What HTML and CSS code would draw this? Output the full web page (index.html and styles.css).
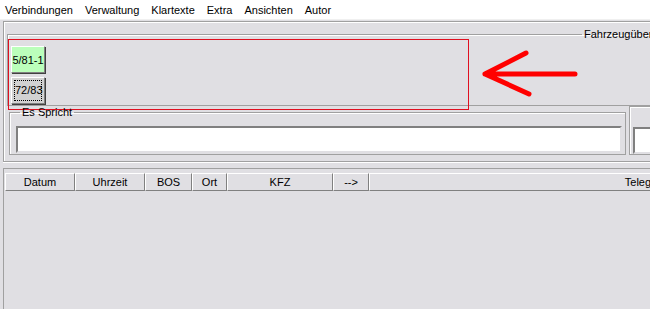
FILE: index.html
```html
<!DOCTYPE html>
<html>

<head>
    <title>Funk Leitstelle</title>
    <link rel="stylesheet" href="styles.css">
</head>

<body>
    <div class="menubar">
        <span>Verbindungen</span>
        <span>Verwaltung</span>
        <span>Klartexte</span>
        <span>Extra</span>
        <span>Ansichten</span>
        <span>Autor</span>
    </div>

    <div class="top-panel">
        <fieldset class="fahrzeuge">
            <legend>Fahrzeugübersicht</legend>
            <div class="marked">
                <button class="car green">5/81-1</button>
                <button class="car focused"><span>72/83</span></button>
            </div>
        </fieldset>

        <div class="speak-row">
            <fieldset class="speaker">
                <legend>Es Spricht</legend>
                <input type="text" class="field">
            </fieldset>
            <fieldset class="speaker second">
                <input type="text" class="field">
            </fieldset>
        </div>

        <!-- annotation arrow -->
        <svg class="arrow" width="110" height="56" viewBox="0 0 110 56">
            <path d="M96 27 L6 27 M6 27 L47 6 M6 27 L50 47" fill="none" stroke="#ff0000" stroke-width="5" stroke-linecap="round" stroke-linejoin="round"/>
        </svg>
    </div>

    <div class="log">
        <div class="log-head">
            <div class="col" style="width:70px">Datum</div>
            <div class="col" style="width:70px">Uhrzeit</div>
            <div class="col" style="width:47px">BOS</div>
            <div class="col" style="width:35px">Ort</div>
            <div class="col" style="width:106px">KFZ</div>
            <div class="col" style="width:36px">--&gt;</div>
            <div class="col" style="width:566px">Telegramm</div>
        </div>
    </div>
</body>

</html>
```

FILE: styles.css
```css
body {
    margin: 0;
    background-color: #e0dfe3;
    font-family: "Liberation Sans", Arial, sans-serif;
    font-size: 11px;
    color: #000;
    overflow: hidden;
    width: 650px;
    height: 309px;
}

.menubar {
    height: 19px;
    background-color: #fff;
    display: flex;
    align-items: center;
    padding-left: 5px;
    border-bottom: 1px solid #f0f0f0;
}

.menubar span {
    margin-right: 12px;
}

.top-panel {
    position: relative;
    width: 720px;
    height: 141px;
    margin: 1px 0 0 3px;
    border-top: 1px solid #a0a0a0;
    border-left: 1px solid #a0a0a0;
    border-bottom: 1px solid #a0a0a0;
    box-shadow: inset 1px 1px #fff, 0 1px #fff;
    padding: 6px 0 0 3px;
    box-sizing: border-box;
}

fieldset {
    margin: 0;
    border: 1px solid #d0d0bf;
    border-top-color: #a0a0a0;
    box-shadow: inset 1px 1px #fff;
}

legend {
    padding: 0 2px;
    line-height: 12px;
}

.fahrzeuge {
    width: 700px;
    height: 78px;
    padding: 0;
    box-sizing: border-box;
    border-color: #a0a0a0;
}

.fahrzeuge legend {
    margin-left: 574px;
}

.marked {
    width: 461px;
    height: 71px;
    margin: -1px 0 0 0;
    border: 1px solid #e01020;
    box-sizing: border-box;
    display: flex;
    flex-direction: column;
    gap: 4px;
    padding: 6px 0 0 2px;
}

.car {
    width: 34px;
    height: 27px;
    padding: 0;
    font-family: "Liberation Sans", Arial, sans-serif;
    font-size: 11px;
    color: #000;
    border: 1px solid #808080;
    border-top-color: #fff;
    border-left-color: #fff;
    box-shadow: 1px 1px #404040;
    background-color: #d4d0c8;
}

.car.green {
    background-color: #bbffbb;
}

.car.focused {
    background-color: #d2d2d2;
}

.car.focused span {
    display: block;
    margin: 2px;
    height: 19px;
    line-height: 19px;
    border: 1px dotted #000;
}

.speak-row {
    display: flex;
    gap: 3px;
    margin: 0 0 0 2px;
}

.speaker {
    width: 617px;
    height: 49px;
    padding: 6px 3px 0 6px;
    box-sizing: border-box;
    border-color: #a0a0a0;
    flex-shrink: 0;
}

.speaker legend {
    margin-left: 4px;
}

.speaker.second {
    width: 80px;
    padding-top: 18px;
    padding-left: 3px;
}

.field {
    display: block;
    width: 100%;
    height: 27px;
    margin: 2px 0 0 0;
    box-sizing: border-box;
    border: 2px solid #808080;
    border-right-color: #e0dfe3;
    border-bottom-color: #e0dfe3;
    background-color: #fff;
}

.arrow {
    position: absolute;
    left: 475px;
    top: 25px;
}

.log {
    margin: 6px 0 0 3px;
    height: 200px;
    border-left: 1px solid #a0a0a0;
    border-top: 1px solid #a0a0a0;
    padding: 4px 0 0 1px;
}

.log-head {
    display: flex;
    width: 1000px;
}

.col {
    height: 18px;
    line-height: 17px;
    text-align: center;
    box-sizing: border-box;
    background-color: #e0dfe3;
    border: 1px solid #808080;
    border-top-color: #fff;
    border-left-color: #fff;
    flex-shrink: 0;
}
```
